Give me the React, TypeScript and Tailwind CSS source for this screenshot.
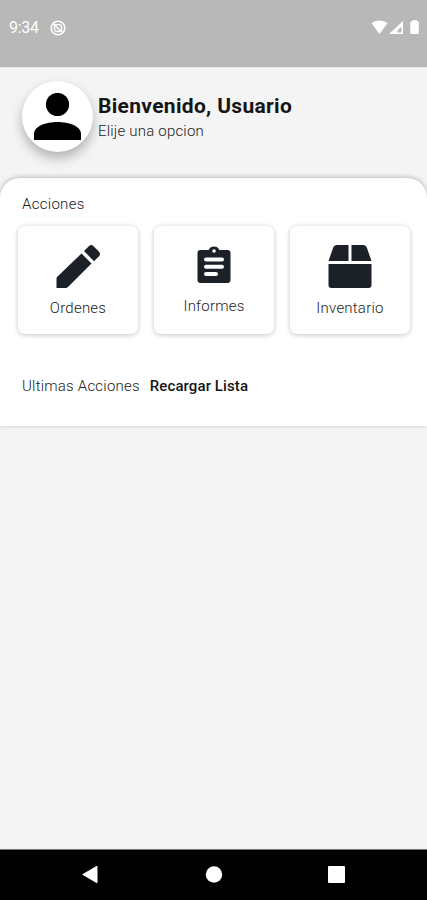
import React from "react";

function StatusBar() {
  return (
    <header className="flex h-[67px] shrink-0 items-start justify-between bg-[#b8b8b8] pt-[19px] pr-[7px] pl-[9px] text-white">
      <div className="flex items-center gap-[10px]">
        <span className="w-[31px] text-[16px] leading-[18px] whitespace-nowrap tracking-[-0.3px]">9:34</span>
        <svg className="size-4" viewBox="0 0 16 16" fill="none" stroke="currentColor">
          <circle cx="8" cy="8" r="6.8" strokeWidth="1.6" />
          <path d="M5.200 4.600h3.900a2.400 2.400 0 0 1 2.400 2.400v3.700M10 11.500H6.900a2.400 2.400 0 0 1-2.400-2.400V6" strokeWidth="1.3" />
          <path d="M3.400 3.800 12 12.300" strokeWidth="1.5" />
        </svg>
      </div>
      <svg className="h-[18px] w-[50px]" viewBox="0 0 50 18" fill="currentColor">
        <path d="M1.500 4.200C5.700.6 13.100.6 17.500 4.200L9.500 15Z" />
        <path fillRule="evenodd" d="M33 2v13H19Zm-1.500 5.500-4 4v2h4Z" />
        <path d="M42.800 1h4v1.300h1q1 0 1 1V14q0 1-1 1h-6.500q-1 0-1-1V3.300q0-1 1-1h1.500Z" />
      </svg>
    </header>
  );
}

function ActionCard({ label, children, className = "" }: { label: string; children: React.ReactNode; className?: string }) {
  return (
    <button className="flex h-[108px] flex-1 flex-col items-center rounded-[7px] bg-white pt-[18px] shadow-[0_1px_5px_rgba(0,0,0,0.24)]">
      {children}
      <span className={`text-[15px] leading-[18px] font-light tracking-[0.22px] whitespace-nowrap text-[#222] ${className}`}>{label}</span>
    </button>
  );
}

export default function App() {
  return (
    <div className="flex h-[900px] w-[427px] flex-col overflow-hidden bg-[#f4f4f4] font-['Roboto',sans-serif]">
      <StatusBar />
      <section className="flex h-[111px] shrink-0 items-start border-t border-[#e5e5e5] pt-[13px] pl-[22px]">
        <div className="flex size-[71px] items-center justify-center rounded-full bg-white shadow-[0_6px_12px_rgba(0,0,0,0.28)]">
          <svg className="h-[47px] w-[47px]" viewBox="0 0 47 47">
            <circle cx="23.500" cy="11.500" r="11.600" />
            <path d="M0 47V41C0 33 12 29 23.500 29S47 33 47 41v6Z" />
          </svg>
        </div>
        <div className="pt-[13px] pl-[5px]">
          <h1 className="text-[21px] leading-6 font-bold tracking-[0.32px] whitespace-nowrap text-[#151515]">Bienvenido, Usuario</h1>
          <p className="mt-[4px] text-[15px] leading-[18px] font-light tracking-[0.2px] whitespace-nowrap text-[#222]">Elije una opcion</p>
        </div>
      </section>
      <main className="h-[248px] shrink-0 rounded-t-[20px] bg-white shadow-[0_-1px_5px_rgba(0,0,0,0.24)]">
        <h2 className="pt-[17px] pl-[22px] text-[15px] leading-[18px] font-light tracking-[0.3px] text-[#222]">Acciones</h2>
        <div className="mt-[13px] flex gap-4 pr-[17px] pl-[18px]">
          <ActionCard label="Ordenes" className="mt-[9px]">
            <svg className="size-[46px]" viewBox="0 0 46 46" fill="#1b2127">
              <path d="m26.500 9.500 10 10L13 43q-1 1-2.300 1H1.500V34.500q0-1 .8-1.800Z" />
              <path d="m29 7 4.600-4.600q2.600-2.600 5.200 0l5 5q2.400 2.600 0 5.200L39 17.200Z" />
            </svg>
          </ActionCard>
          <ActionCard label="Informes" className="mt-[7px]">
            <svg className="size-[46px]" viewBox="0 0 46 46" fill="#1b2127">
              <path d="M9.500 6h8.100a6 6 0 0 1 10.800 0H36.500q3 0 3 3v27q0 3-3 3h-27q-3 0-3-3v-27Q6.500 6 9.500 6Z" />
              <g fill="none" stroke="white" strokeLinecap="round">
                <circle cx="23" cy="7" r="1.800" fill="white" stroke="none" />
                <path d="M15 15.500h16M15 22.800h16M15 30h10" strokeWidth="4" />
              </g>
            </svg>
          </ActionCard>
          <ActionCard label="Inventario" className="mt-[9px]">
            <svg className="size-[46px]" viewBox="0 0 46 46" fill="#1b2127">
              <path d="M9.500 1H21.500v16H1.500L6.200 3.500Q7 1 9.500 1ZM24.500 1h12q2.500 0 3.300 2.500L44.500 17h-20ZM1.500 20h43v21q0 3-3 3h-37q-3 0-3-3Z" />
            </svg>
          </ActionCard>
        </div>
        <div className="mt-[43px] flex items-center gap-[10px] pl-[22px] text-[15px] leading-[18px] whitespace-nowrap">
          <span className="font-light tracking-[0.22px] text-[#222]">Ultimas Acciones</span>
          <button className="font-medium tracking-[0.1px] text-[#151515]">Recargar Lista</button>
        </div>
      </main>
      <nav className="mt-auto h-[51px] shrink-0 border-t border-[#777] bg-black">
        <svg className="h-[50px] w-[427px]" viewBox="0 0 427 50" fill="white">
          <path d="M82 24.500 96.500 16q1-.5 1 1v15q0 1.500-1 1Z" />
          <circle cx="214" cy="24.500" r="8.200" />
          <rect x="328" y="16" width="17" height="17" rx="1" />
        </svg>
      </nav>
    </div>
  );
}
